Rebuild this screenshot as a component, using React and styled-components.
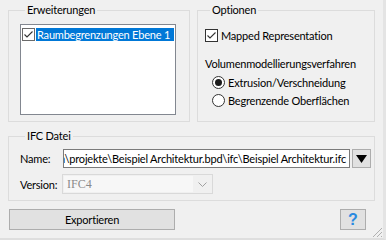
import React from "react";
import styled, { createGlobalStyle } from "styled-components";

const Global = createGlobalStyle`
  html, body { margin: 0; padding: 0; background: #f0f0f0; }
  * { box-sizing: border-box; }
`;

const FONT = `Lato, "Noto Sans", sans-serif`;

const Window = styled.div`
  position: relative;
  width: 386px;
  height: 240px;
  background: #f0f0f0;
  font-family: ${FONT};
  font-size: 11px;
  letter-spacing: -0.2px;
  color: #000;
  padding: 3px 0 0 8px;
  border-right: 3px solid #e4e4e4;
  border-bottom: 2px solid #dedede;
  display: flex;
  flex-direction: column;
  overflow: hidden;
`;

const TopRow = styled.div`
  display: flex;
  gap: 7px;
  align-items: stretch;
`;

const Group = styled.fieldset`
  margin: 0;
  min-width: 0;
  width: ${(p) => p.$w}px;
  flex: none;
  border: 1px solid #dcdcdc;
  padding: ${(p) => p.$pad};
  display: flex;
  flex-direction: column;
`;

const Legend = styled.legend`
  margin-left: 5px;
  padding: 0 2px;
  line-height: 14px;
  height: 14px;
  font-size: 11px;
`;

const ListBox = styled.div`
  width: 156px;
  height: 91px;
  background: #fff;
  border: 1px solid #828790;
  padding: 2px 1px;
`;

const ListRow = styled.div`
  display: flex;
  align-items: center;
  gap: 1px;
  height: 14px;
`;

const Box = styled.span`
  width: 13px;
  height: 13px;
  flex: none;
  border: 1px solid ${(p) => (p.$dim ? "#6a6a6a" : "#333")};
  background: #fff;
  display: flex;
  align-items: center;
  justify-content: center;
`;

const Selected = styled.span`
  flex: 1;
  height: 13px;
  line-height: 13px;
  background: #0078d7;
  color: #fff;
  padding-left: 1px;
  white-space: nowrap;
  overflow: hidden;
`;

const CheckRow = styled.label`
  display: flex;
  align-items: center;
  gap: 3px;
  height: 15px;
  margin: ${(p) => p.$m || "0"};
`;

const Text = styled.span`
  line-height: 15px;
  white-space: nowrap;
  margin-top: ${(p) => p.$mt || 0}px;
`;

const Radio = styled.span`
  width: 13px;
  height: 13px;
  flex: none;
  border-radius: 50%;
  border: 1px solid #333;
  background: #fff;
  display: flex;
  align-items: center;
  justify-content: center;
  &::after {
    content: "";
    display: ${(p) => (p.$on ? "block" : "none")};
    width: 7px;
    height: 7px;
    border-radius: 50%;
    background: #1b1b1b;
  }
`;

const FormRow = styled.div`
  display: flex;
  align-items: center;
  height: ${(p) => p.$h}px;
  margin-top: ${(p) => p.$mt || 0}px;
`;

const Label = styled.span`
  width: ${(p) => p.$w}px;
  flex: none;
  line-height: 15px;
  white-space: nowrap;
`;

const PathField = styled.div`
  width: 287px;
  flex: none;
  height: 19px;
  background: #fff;
  border: 1px solid #7a7a7a;
  display: flex;
  justify-content: flex-end;
  align-items: center;
  overflow: hidden;
  white-space: nowrap;
  padding-right: 3px;
`;

const ArrowButton = styled.button`
  margin-left: 2px;
  width: 19px;
  height: 19px;
  flex: none;
  padding: 0;
  background: #e1e1e1;
  border: 1px solid #adadad;
  display: flex;
  align-items: center;
  justify-content: center;
`;

const Combo = styled.div`
  width: 151px;
  flex: none;
  height: 20px;
  border: 1px solid #d9d9d9;
  background: #f0f0f0;
  display: flex;
  align-items: stretch;
  padding: 1px;
`;

const ComboText = styled.div`
  flex: 1;
  background: #f7f7f7;
  color: #8a8a8a;
  font-family: "Liberation Serif", serif;
  font-size: 12px;
  letter-spacing: 0;
  line-height: 16px;
  padding-left: 3px;
`;

const ComboArrow = styled.div`
  width: 18px;
  display: flex;
  align-items: center;
  justify-content: center;
`;

const BottomRow = styled.div`
  display: flex;
  justify-content: space-between;
  margin-top: 8px;
  padding-left: 1px;
  width: 358px;
`;

const Button = styled.button`
  width: ${(p) => p.$w}px;
  height: 21px;
  background: #e1e1e1;
  border: 1px solid #adadad;
  font-family: ${FONT};
  font-size: 11px;
  letter-spacing: -0.2px;
  color: #000;
  padding: 0;
  display: flex;
  align-items: center;
  justify-content: center;
`;

const HelpMark = styled.span`
  color: #2a8ae0;
  font-family: "Liberation Sans", sans-serif;
  font-weight: bold;
  font-size: 16px;
  letter-spacing: 0;
`;

const Grip = styled.svg`
  position: absolute;
  right: 0;
  bottom: 0;
`;

const Check = () => (
  <svg width="11" height="11" viewBox="0 0 11 11">
    <polyline points="1.5,5.5 4,8 9.5,2.5" fill="none" stroke="#333" strokeWidth="1.1" />
  </svg>
);

export default function App() {
  return (
    <Window>
      <Global />
      <TopRow>
        <Group $w={182} $pad="7px 12px 6px 11px">
          <Legend>Erweiterungen</Legend>
          <ListBox>
            <ListRow>
              <Box $dim>
                <Check />
              </Box>
              <Selected>Raumbegrenzungen Ebene 1</Selected>
            </ListRow>
          </ListBox>
        </Group>
        <Group $w={178} $pad="11px 6px 6px 7px">
          <Legend>Optionen</Legend>
          <CheckRow>
            <Box>
              <Check />
            </Box>
            <Text>Mapped Representation</Text>
          </CheckRow>
          <Text $mt={13}>Volumenmodellierungsverfahren</Text>
          <CheckRow $m="4px 0 0 7px">
            <Radio $on />
            <Text>Extrusion/Verschneidung</Text>
          </CheckRow>
          <CheckRow $m="3px 0 0 7px">
            <Radio />
            <Text>Begrenzende Oberflächen</Text>
          </CheckRow>
        </Group>
      </TopRow>
      <Group $w={367} $pad="6px 2px 6px 11px" style={{ marginTop: 7 }}>
        <Legend>IFC Datei</Legend>
        <FormRow $h={19}>
          <Label $w={43}>Name:</Label>
          <PathField>C:\Daten\projekte\Beispiel Architektur.bpd\ifc\Beispiel Architektur.ifc</PathField>
          <ArrowButton>
            <svg width="11" height="8" viewBox="0 0 11 8">
              <polygon points="0,0 11,0 5.5,8" fill="#000" />
            </svg>
          </ArrowButton>
        </FormRow>
        <FormRow $h={20} $mt={6}>
          <Label $w={42}>Version:</Label>
          <Combo>
            <ComboText>IFC4</ComboText>
            <ComboArrow>
              <svg width="9" height="5" viewBox="0 0 9 5">
                <polyline points="0.5,0.5 4.5,4.5 8.5,0.5" fill="none" stroke="#a0a0a0" />
              </svg>
            </ComboArrow>
          </Combo>
        </FormRow>
      </Group>
      <BottomRow>
        <Button $w={166}>Exportieren</Button>
        <Button $w={26}>
          <HelpMark>?</HelpMark>
        </Button>
      </BottomRow>
      <Grip width="12" height="12" viewBox="0 0 12 12">
        <g stroke="#b0b0b0" strokeWidth="1">
          <line x1="11" y1="2" x2="2" y2="11" />
          <line x1="11" y1="6" x2="6" y2="11" />
          <line x1="11" y1="10" x2="10" y2="11" />
        </g>
      </Grip>
    </Window>
  );
}
